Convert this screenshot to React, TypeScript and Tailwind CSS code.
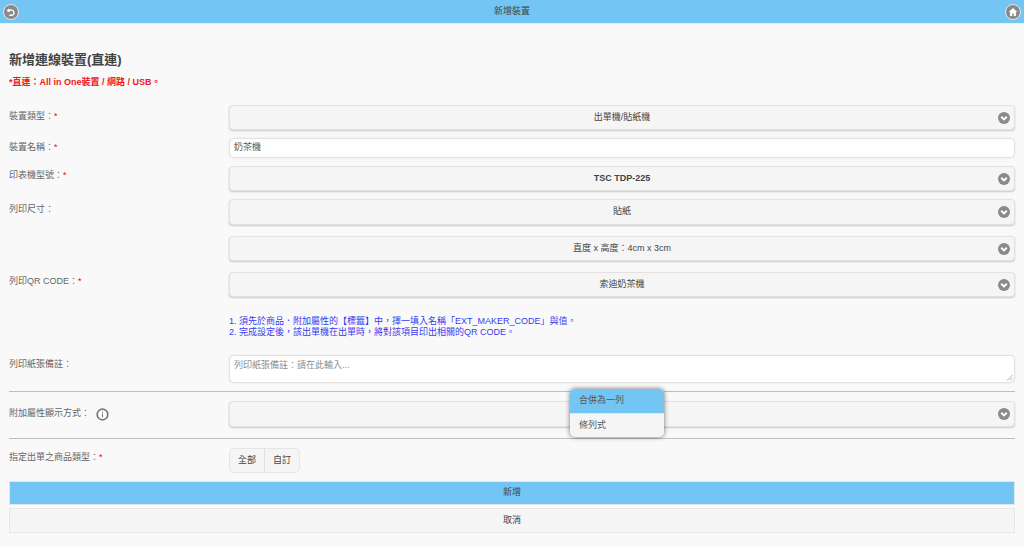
import React from "react";

const font = "font-['Liberation_Sans','Noto_Sans_CJK_TC',sans-serif]";

function Chevron() {
  return (
    <svg width="14" height="14" viewBox="0 0 14 14" className="shrink-0">
      <circle cx="7" cy="7" r="6" fill="#8a8a8a" />
      <path d="M4.2 5.8 7 8.4 9.8 5.8" fill="none" stroke="#fff" strokeWidth="1.9" />
    </svg>
  );
}

function Select({ text, bold, h = "h-[25px]", cls = "" }: { text?: string; bold?: boolean; h?: string; cls?: string }) {
  return (
    <div className={`relative flex ${h} w-full items-center justify-center rounded-[4px] border border-[#e2e2e2] bg-[#f5f5f5] shadow-[0_1px_2px_rgba(0,0,0,0.2)] ${cls}`}>
      <span className={`text-[9px] text-[#444] ${bold ? "font-bold" : ""}`}>{text}</span>
      <span className="absolute right-[3px] top-1/2 flex -translate-y-1/2">
        <Chevron />
      </span>
    </div>
  );
}

function Label({ text, req, pt = "pt-[5px]" }: { text: string; req?: boolean; pt?: string }) {
  return (
    <div className={`w-[220px] shrink-0 text-[9px] leading-[12px] text-[#666] ${pt}`}>
      {text}
      {req && <span className="text-[#f00]">*</span>}
    </div>
  );
}

function Row({ children, cls = "" }: { children: React.ReactNode; cls?: string }) {
  return <div className={`flex ${cls}`}>{children}</div>;
}

export default function App() {
  return (
    <div className={`relative h-[546px] w-[1024px] overflow-hidden bg-[#f9f9f9] ${font}`}>
      <header className="relative flex h-[24px] items-center justify-between border-b border-[#e6eef3] bg-[#73c5f3] px-[3px]">
        <span className="flex h-[16px] w-[16px] items-center justify-center rounded-full border border-[#e8e8e8] bg-[#8a8a8a]">
          <svg width="12" height="12" viewBox="0 0 12 12" fill="none" stroke="#fff" strokeWidth="1.4">
            <path d="M4.1 2.9 2.7 4.7l2 .9" />
            <path d="M3 4.6c2.6-1.2 6-.6 6 2.2 0 2.2-2.6 3-4.6 2.2" />
          </svg>
        </span>
        <span className="text-[9px] text-[#444]">新增裝置</span>
        <span className="flex h-[16px] w-[16px] items-center justify-center rounded-full border border-[#e8e8e8] bg-[#8a8a8a]">
          <svg width="10" height="10" viewBox="0 0 10 10" fill="#fff">
            <path d="M5 .9.8 5h1.3v4h2.1V6.4h1.6V9h2.1V5h1.3z" />
          </svg>
        </span>
      </header>

      <main className="px-[9px]">
        <h1 className="mt-[27px] text-[13px] font-bold leading-[18px] text-[#444]">新增連線裝置(直連)</h1>
        <p className="mt-[7px] text-[9px] font-bold leading-[12px] text-[#f01818]">*直連：All in One裝置 / 網路 / USB。</p>

        <Row cls="mt-[17px]">
          <Label text="裝置類型：" req />
          <div className="flex-1"><Select text="出單機/貼紙機" /></div>
        </Row>

        <Row cls="mt-[8px]">
          <Label text="裝置名稱：" req pt="pt-[3px]" />
          <div className="flex h-[20px] flex-1 items-center rounded-[5px] border border-[#e2e2e2] bg-white px-[4px] text-[9px] text-[#555] shadow-[0_0_2px_rgba(0,0,0,0.1)]">奶茶機</div>
        </Row>

        <Row cls="mt-[8px]">
          <Label text="印表機型號：" req pt="pt-[3px]" />
          <div className="flex-1"><Select text="TSC TDP-225" bold /></div>
        </Row>

        <Row cls="mt-[8px]">
          <Label text="列印尺寸：" pt="pt-[4px]" />
          <div className="flex flex-1 flex-col gap-[11px]">
            <Select text="貼紙" h="h-[26px]" />
            <Select text="直度 x 高度：4cm x 3cm" h="h-[25px]" />
          </div>
        </Row>

        <Row cls="mt-[11px]">
          <Label text="列印QR CODE：" req pt="pt-[3px]" />
          <div className="flex-1">
            <Select text="索迪奶茶機" />
            <p className="mt-[19px] text-[9px] leading-[11px] text-[#3a3af0]">
              1. 須先於商品．附加屬性的【標籤】中，擇一填入名稱「EXT_MAKER_CODE」與值。
              <br />
              2. 完成設定後，該出單機在出單時，將對該項目印出相關的QR CODE。
            </p>
          </div>
        </Row>

        <Row cls="mt-[17px]">
          <Label text="列印紙張備註：" pt="pt-[3px]" />
          <div className="relative h-[28px] flex-1 rounded-[5px] border border-[#e2e2e2] bg-white px-[4px] pt-[3px] text-[9px] leading-[12px] text-[#8d8d8d] shadow-[0_0_2px_rgba(0,0,0,0.1)]">
            列印紙張備註：請在此輸入...
            <svg width="7" height="7" viewBox="0 0 7 7" className="absolute bottom-[1px] right-[1px]" stroke="#999" strokeWidth="0.8">
              <path d="M1 6.5 6.5 1M4 6.5 6.5 4" />
            </svg>
          </div>
        </Row>

        <hr className="mt-[8px] border-t border-[#bdbdbd]" />

        <Row cls="mt-[9px]">
          <div className="flex w-[220px] shrink-0 items-center gap-[6px] text-[9px] text-[#666]">
            附加屬性顯示方式：
            <svg width="13" height="13" viewBox="0 0 13 13">
              <circle cx="6.5" cy="6.5" r="5.3" fill="#fff" stroke="#777" strokeWidth="1.7" />
              <path d="M6.5 5.6v3.6M6.5 3.4v1.2" stroke="#777" strokeWidth="1.1" />
            </svg>
          </div>
          <div className="flex-1"><Select h="h-[26px]" /></div>
        </Row>

        <hr className="mt-[11px] border-t border-[#bdbdbd]" />

        <Row cls="mt-[9px]">
          <Label text="指定出單之商品類型：" req pt="pt-[3px]" />
          <div className="flex h-[25px] overflow-hidden rounded-[5px] border border-[#e6e6e6] bg-[#f5f5f5] text-[9px] text-[#444]">
            <span className="flex w-[35px] items-center justify-center border-r border-[#e0e0e0]">全部</span>
            <span className="flex w-[34px] items-center justify-center">自訂</span>
          </div>
        </Row>

        <button className="mt-[8px] flex h-[24px] w-full items-center justify-center border border-[#dfe7ec] bg-[#73c5f3] text-[9px] text-[#444]">新增</button>
        <button className="mt-[3px] flex h-[25px] w-full items-center justify-center border border-[#e6e6e6] bg-[#f5f5f5] text-[9px] text-[#444]">取消</button>
      </main>

      <div className="absolute left-[570px] top-[389px] w-[94px] overflow-hidden rounded-[5px] bg-[#f5f5f5] text-[9px] text-[#555] shadow-[0_0_5px_rgba(0,0,0,0.55)]">
        <div className="flex h-[24px] items-center bg-[#73c5f3] pl-[9px]">合併為一列</div>
        <div className="flex h-[24px] items-center border-t border-[#e6e6e6] pl-[9px]">條列式</div>
      </div>
    </div>
  );
}
